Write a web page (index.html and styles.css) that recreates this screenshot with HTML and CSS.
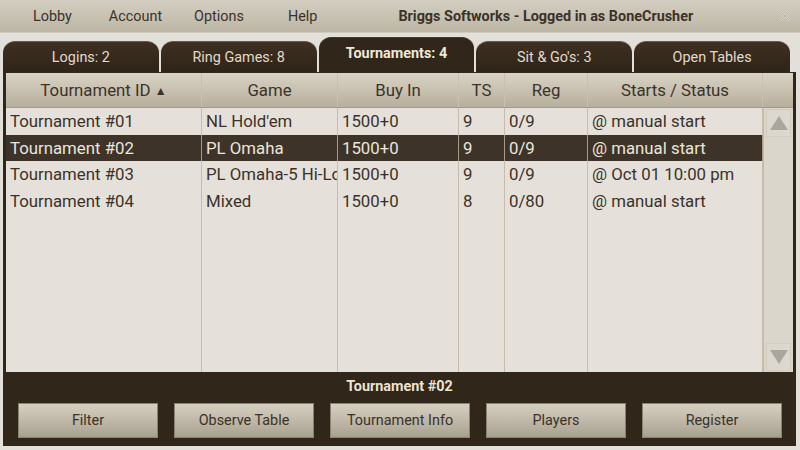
FILE: index.html
```html
<!DOCTYPE html>
<html>
<head>
<meta charset="utf-8">
<link rel="stylesheet" href="styles.css">
</head>
<body>
<div class="menubar">
  <nav class="menu">
    <span class="menu-item m-lobby">Lobby</span>
    <span class="menu-item m-account">Account</span>
    <span class="menu-item m-options">Options</span>
    <span class="menu-item m-help">Help</span>
  </nav>
  <div class="title">Briggs Softworks - Logged in as BoneCrusher</div>
  <svg class="close" width="12" height="12" viewBox="0 0 12 12"><path d="M1.5 1.5 L10.5 10.5 M10.5 1.5 L1.5 10.5" stroke="#d8d4cc" stroke-width="2.2" fill="none"/><path d="M1.5 1.5 L10.5 10.5 M10.5 1.5 L1.5 10.5" stroke="#aaa69c" stroke-width="0.8" fill="none"/></svg>
</div>
<div class="tabs">
  <div class="tab">Logins: 2</div>
  <div class="tab">Ring Games: 8</div>
  <div class="tab active">Tournaments: 4</div>
  <div class="tab">Sit &amp; Go's: 3</div>
  <div class="tab">Open Tables</div>
</div>
<div class="panel">
  <div class="table">
    <div class="row head">
      <div class="cell">Tournament ID <span class="sort">▲</span></div>
      <div class="cell">Game</div>
      <div class="cell">Buy In</div>
      <div class="cell">TS</div>
      <div class="cell">Reg</div>
      <div class="cell">Starts / Status</div>
      <div class="cell sb-head"></div>
    </div>
    <div class="tbody">
      <div class="rows">
        <div class="row">
          <div class="cell">Tournament #01</div><div class="cell">NL Hold'em</div><div class="cell">1500+0</div><div class="cell">9</div><div class="cell">0/9</div><div class="cell">@ manual start</div>
        </div>
        <div class="row selected">
          <div class="cell">Tournament #02</div><div class="cell">PL Omaha</div><div class="cell">1500+0</div><div class="cell">9</div><div class="cell">0/9</div><div class="cell">@ manual start</div>
        </div>
        <div class="row">
          <div class="cell">Tournament #03</div><div class="cell">PL Omaha-5 Hi-Lo</div><div class="cell">1500+0</div><div class="cell">9</div><div class="cell">0/9</div><div class="cell">@ Oct 01 10:00 pm</div>
        </div>
        <div class="row">
          <div class="cell">Tournament #04</div><div class="cell">Mixed</div><div class="cell">1500+0</div><div class="cell">8</div><div class="cell">0/80</div><div class="cell">@ manual start</div>
        </div>
        <div class="row filler">
          <div class="cell"></div><div class="cell"></div><div class="cell"></div><div class="cell"></div><div class="cell"></div><div class="cell"></div>
        </div>
      </div>
      <div class="scrollbar">
        <div class="sb-btn"><svg width="20" height="16" viewBox="0 0 20 16"><path d="M10 1 L19 15 L1 15 Z" fill="#aaa69e"/></svg></div>
        <div class="sb-track"></div>
        <div class="sb-btn"><svg width="20" height="16" viewBox="0 0 20 16"><path d="M1 1 L19 1 L10 15 Z" fill="#aaa69e"/></svg></div>
      </div>
    </div>
  </div>
  <div class="status">Tournament #02</div>
  <div class="actions">
    <button class="btn">Filter</button>
    <button class="btn">Observe Table</button>
    <button class="btn">Tournament Info</button>
    <button class="btn">Players</button>
    <button class="btn">Register</button>
  </div>
</div>
</body>
</html>
```

FILE: styles.css
```css
* { box-sizing: border-box; }
html, body { margin: 0; padding: 0; }
body {
  width: 800px;
  height: 450px;
  overflow: hidden;
  background: #e3e0d9;
  font-family: Roboto, "Liberation Sans", sans-serif;
  color: #3b3229;
}
.menubar {
  height: 33px;
  display: flex;
  align-items: center;
  background: linear-gradient(#d3cec1, #bdb6a5);
  border-bottom: 1px solid #cfcabf;
  position: relative;
}
.menu { display: flex; align-items: center; font-size: 14.4px; }
.menu-item { display: block; }
.m-lobby { margin-left: 33px; }
.m-account { margin-left: 37px; }
.m-options { margin-left: 32px; }
.m-help { margin-left: 44px; }
.title {
  margin-left: 81px;
  font-size: 14.4px;
  font-weight: bold;
  color: #3b3229;
}
.close { position: absolute; right: 9px; top: 10px; }

.tabs {
  display: flex;
  gap: 2px;
  margin: 0 0 0 3px;
  width: 787px;
  height: 39px;
  align-items: flex-end;
}
.tab {
  flex: 1;
  height: 31px;
  border-radius: 12px 12px 0 0;
  background: linear-gradient(#3e3022, #2f2418);
  border-top: 1px solid #6a5a48;
  color: #e2dacb;
  font-size: 14.4px;
  display: flex;
  align-items: center;
  justify-content: center;
}
.tab.active {
  height: 35px;
  border-top: 1px solid #4a3b2c;
  background: #31261a;
  color: #f0e8d8;
  font-weight: bold;
  padding-bottom: 4px;
}

.panel {
  margin-left: 3px;
  width: 793px;
  height: 374px;
  background: #31261a;
  padding: 1px 3px 0 3px;
}
.table {
  height: 299px;
  display: flex;
  flex-direction: column;
  background: #e5e1da;
}
.row {
  display: grid;
  grid-template-columns: 196px 136px 121px 46px 83px 175px;
  height: 26.5px;
  font-size: 16.8px;
}
.row .cell {
  border-right: 1px solid #c6bca9;
  padding: 0 0 0 4px;
  white-space: nowrap;
  overflow: hidden;
  line-height: 27px;
}
.row.head {
  grid-template-columns: 196px 136px 121px 46px 83px 175px 30px;
  height: 35px;
  background: linear-gradient(#d9d3c5, #b7af9d);
  border-bottom: 1px solid #a59a85;
}
.row.head .cell {
  line-height: 34px;
  text-align: center;
  padding: 0;
  border-right: 1px solid #c8bfad;
}
.row.head .sb-head { border-right: none; }
.sort { font-size: 12px; vertical-align: 1px; }
.tbody { flex: 1; display: flex; }
.rows { flex: 1; display: flex; flex-direction: column; }
.row.selected { background: #3d3329; color: #ebe5db; }
.row.selected .cell { border-right-color: #a89a84; }
.row.filler { flex: 1; }
.scrollbar {
  width: 30px;
  background: #dbd6cb;
  border-left: 1px solid #c6bca9;
  display: flex;
  flex-direction: column;
  padding: 1px 2px 1px 2px;
}
.sb-btn {
  height: 28px;
  display: flex;
  align-items: center;
  justify-content: center;
  background: #ddd8cf;
  border: 1px solid #d2ccc0;
}
.sb-track { flex: 1; }

.status {
  height: 31px;
  text-align: center;
  font-size: 14.4px;
  font-weight: bold;
  color: #ece3d3;
  line-height: 30px;
}
.actions {
  display: flex;
  gap: 16px;
  padding-left: 12px;
}
.btn {
  width: 140px;
  height: 35px;
  font-family: Roboto, "Liberation Sans", sans-serif;
  font-size: 14.4px;
  color: #3b3229;
  background: linear-gradient(#d6d0c1, #a9a190);
  border: 1px solid #8b8170;
  border-radius: 0;
  padding: 0;
}
```
